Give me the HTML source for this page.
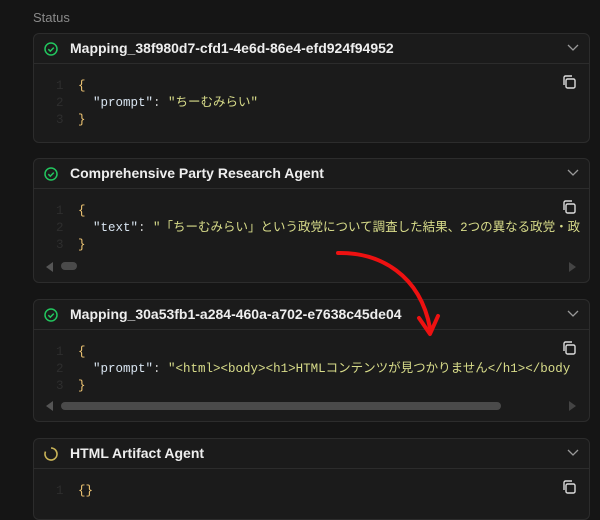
<!DOCTYPE html><html style="background:#151515"><head><meta charset="utf-8"><style>
html,body{background:#151515}
body{margin:0;width:600px;height:506px;font-family:"Liberation Sans","Noto Sans CJK JP",sans-serif;position:relative;overflow:hidden}
.st{position:absolute;left:33px;top:10px;color:#8a8a8a;font-size:13px}
.card{position:absolute;left:33px;width:555px;background:#1b1b1b;border:1px solid #2c2c2c;border-radius:6px;overflow:hidden}
.hd{height:29px;border-bottom:1px solid #2c2c2c;position:relative}
.hd .t{position:absolute;left:36px;top:6px;color:#eee;font-size:14px;font-weight:bold}
.hd svg.i{position:absolute;left:10px;top:8px}
.hd .ch{position:absolute;right:10px;top:10px}
.code{position:relative;font-family:"Liberation Mono","Noto Sans CJK JP",monospace;font-size:12.5px;line-height:17px;padding-top:14px}
.ln{position:absolute;left:22px;color:#2e2e2e}
.l{position:relative;height:17px}
.tx{position:absolute;left:44px;white-space:pre}
.b{color:#f0c674}.k{color:#d8e4f0}.s{color:#d8dc8a}.p{color:#ccc}
.cp{position:absolute;right:12px;top:10px}
.sb{position:absolute;left:0;right:0;height:12px}
</style></head><body>
<div class="st">Status</div>

<div class="card" style="top:33px;height:108px">
<div class="hd"><svg class="i" width="14" height="14" viewBox="0 0 14 14"><circle cx="7" cy="7" r="6" fill="none" stroke="#22c55e" stroke-width="1.5"/><path d="M4.3 7.2l2 2 3.5-3.6" fill="none" stroke="#22c55e" stroke-width="1.5"/></svg><span class="t">Mapping_38f980d7-cfd1-4e6d-86e4-efd924f94952</span><svg class="ch" width="12" height="8" viewBox="0 0 12 8"><path d="M1 1l5 5 5-5" fill="none" stroke="#999" stroke-width="1.3"/></svg></div>
<div class="code"><svg class="cp" width="16" height="16" viewBox="0 0 16 16"><rect x="5" y="5" width="9" height="9" rx="1.5" fill="none" stroke="#ddd" stroke-width="1.4"/><path d="M3 11V3.5C3 2.7 3.7 2 4.5 2H11" fill="none" stroke="#ddd" stroke-width="1.4"/></svg><div class="l"><span class="ln">1</span><span class="tx b">{</span></div><div class="l"><span class="ln">2</span><span class="tx">  <span class="k">"prompt"</span><span class="p">: </span><span class="s">"ちーむみらい"</span></span></div><div class="l"><span class="ln">3</span><span class="tx b">}</span></div></div>
</div>

<div class="card" style="top:158px;height:123px">
<div class="hd"><svg class="i" width="14" height="14" viewBox="0 0 14 14"><circle cx="7" cy="7" r="6" fill="none" stroke="#22c55e" stroke-width="1.5"/><path d="M4.3 7.2l2 2 3.5-3.6" fill="none" stroke="#22c55e" stroke-width="1.5"/></svg><span class="t">Comprehensive Party Research Agent</span><svg class="ch" width="12" height="8" viewBox="0 0 12 8"><path d="M1 1l5 5 5-5" fill="none" stroke="#999" stroke-width="1.3"/></svg></div>
<div class="code"><svg class="cp" width="16" height="16" viewBox="0 0 16 16"><rect x="5" y="5" width="9" height="9" rx="1.5" fill="none" stroke="#ddd" stroke-width="1.4"/><path d="M3 11V3.5C3 2.7 3.7 2 4.5 2H11" fill="none" stroke="#ddd" stroke-width="1.4"/></svg><div class="l"><span class="ln">1</span><span class="tx b">{</span></div><div class="l"><span class="ln">2</span><span class="tx">  <span class="k">"text"</span><span class="p">: </span><span class="s">"「ちーむみらい」という政党について調査した結果、2つの異なる政党・政</span></span></div><div class="l"><span class="ln">3</span><span class="tx b">}</span></div><div class="sb" style="top:71px"><svg style="position:absolute;left:12px;top:2px" width="8" height="10"><path d="M7 0v10L0 5z" fill="#555"/></svg><div style="position:absolute;left:27px;top:2px;width:16px;height:8px;border-radius:4px;background:#4a4a4a"></div><svg style="position:absolute;right:12px;top:2px" width="8" height="10"><path d="M0 0v10L7 5z" fill="#444"/></svg></div></div>
</div>

<div class="card" style="top:299px;height:121px">
<div class="hd"><svg class="i" width="14" height="14" viewBox="0 0 14 14"><circle cx="7" cy="7" r="6" fill="none" stroke="#22c55e" stroke-width="1.5"/><path d="M4.3 7.2l2 2 3.5-3.6" fill="none" stroke="#22c55e" stroke-width="1.5"/></svg><span class="t">Mapping_30a53fb1-a284-460a-a702-e7638c45de04</span><svg class="ch" width="12" height="8" viewBox="0 0 12 8"><path d="M1 1l5 5 5-5" fill="none" stroke="#999" stroke-width="1.3"/></svg></div>
<div class="code"><svg class="cp" width="16" height="16" viewBox="0 0 16 16"><rect x="5" y="5" width="9" height="9" rx="1.5" fill="none" stroke="#ddd" stroke-width="1.4"/><path d="M3 11V3.5C3 2.7 3.7 2 4.5 2H11" fill="none" stroke="#ddd" stroke-width="1.4"/></svg><div class="l"><span class="ln">1</span><span class="tx b">{</span></div><div class="l"><span class="ln">2</span><span class="tx">  <span class="k">"prompt"</span><span class="p">: </span><span class="s">"&lt;html&gt;&lt;body&gt;&lt;h1&gt;HTMLコンテンツが見つかりません&lt;/h1&gt;&lt;/body</span></span></div><div class="l"><span class="ln">3</span><span class="tx b">}</span></div><div class="sb" style="top:70px"><svg style="position:absolute;left:12px;top:1px" width="8" height="10"><path d="M7 0v10L0 5z" fill="#555"/></svg><div style="position:absolute;left:27px;top:2px;width:440px;height:8px;border-radius:4px;background:#4a4a4a"></div><svg style="position:absolute;right:12px;top:1px" width="8" height="10"><path d="M0 0v10L7 5z" fill="#444"/></svg></div></div>
</div>

<div class="card" style="top:438px;height:80px">
<div class="hd"><svg class="i" width="14" height="14" viewBox="0 0 14 14"><path d="M7 1A6 6 0 1 1 1.5 4.6" fill="none" stroke="#c9b458" stroke-width="1.6"/></svg><span class="t">HTML Artifact Agent</span><svg class="ch" width="12" height="8" viewBox="0 0 12 8"><path d="M1 1l5 5 5-5" fill="none" stroke="#999" stroke-width="1.3"/></svg></div>
<div class="code"><svg class="cp" width="16" height="16" viewBox="0 0 16 16"><rect x="5" y="5" width="9" height="9" rx="1.5" fill="none" stroke="#ddd" stroke-width="1.4"/><path d="M3 11V3.5C3 2.7 3.7 2 4.5 2H11" fill="none" stroke="#ddd" stroke-width="1.4"/></svg><div class="l"><span class="ln">1</span><span class="tx b">{}</span></div></div>
</div>

<svg style="position:absolute;left:0;top:0" width="600" height="506"><path d="M338 253C380 252 420 275 430 328" fill="none" stroke="#e11" stroke-width="4" stroke-linecap="round"/><path d="M419 318L430 334L438 316" fill="none" stroke="#e11" stroke-width="4" stroke-linecap="round" stroke-linejoin="round"/></svg>
</body></html>
